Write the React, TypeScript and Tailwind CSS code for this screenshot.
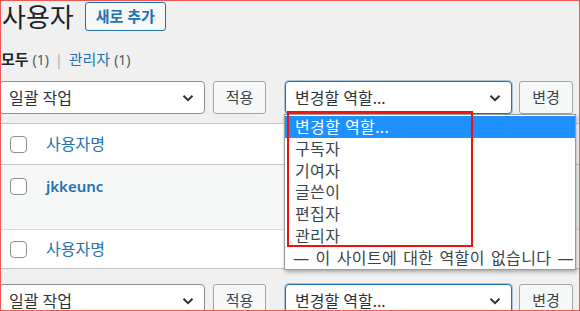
import type { ReactNode } from "react";

const FONT = "font-['Noto_Sans','Noto_Sans_CJK_KR',sans-serif]";

function Chevron() {
  return (
    <svg width="12" height="8" viewBox="0 0 12 8" className="shrink-0">
      <path d="M1.5 1.8 6 6.2l4.5-4.4" fill="none" stroke="#2c3338" strokeWidth="2" />
    </svg>
  );
}

function FakeSelect({
  label,
  className,
  focused,
}: {
  label: string;
  className: string;
  focused?: boolean;
}) {
  return (
    <div
      className={`${className} h-[33px] flex items-center justify-between pl-[9px] pr-[10px] bg-white rounded-[4px] border text-[16px] text-[#2c3338] ${
        focused ? "border-[#2271b1] shadow-[0_0_0_1px_rgba(34,113,177,0.35)]" : "border-[#8c8f94]"
      }`}
    >
      <span>{label}</span>
      <Chevron />
    </div>
  );
}

function Button({ children, className }: { children: ReactNode; className: string }) {
  return (
    <div
      className={`${className} h-[33px] flex items-center justify-center rounded-[3px] border border-[#a0a5aa] bg-[#f6f7f7] text-[15px] text-[#3c434a]`}
    >
      {children}
    </div>
  );
}

function Checkbox() {
  return <div className="w-[17px] h-[17px] shrink-0 rounded-[4px] border border-[#8c8f94] bg-white" />;
}

function Tablenav() {
  return (
    <div className="flex items-center h-[33px]">
      <FakeSelect label="일괄 작업" className="w-[206px] ml-[-2px]" />
      <Button className="w-[53px] ml-[8px]">적용</Button>
      <FakeSelect label="변경할 역할..." className="w-[227px] ml-[19px]" focused />
      <Button className="w-[54px] ml-[7px]">변경</Button>
    </div>
  );
}

const roles = ["변경할 역할...", "구독자", "기여자", "글쓴이", "편집자", "관리자"];

export default function App() {
  return (
    <div
      className={`${FONT} relative w-[580px] h-[311px] overflow-hidden bg-[#f0f0f1] border border-[#f25757]`}
    >
      {/* heading */}
      <div className="flex items-center h-[31px]">
        <h1 className="text-[26px] leading-[34px] text-[#1d2327] ml-[1px] whitespace-nowrap">사용자</h1>
        <div className="ml-[11px] h-[29px] px-[10px] flex items-center rounded-[3px] border border-[#2271b1] bg-[#f6f7f7] text-[15px] font-semibold text-[#2271b1]">
          새로 추가
        </div>
      </div>

      {/* views */}
      <div className="mt-[17px] h-[20px] flex items-center text-[14px] text-[#50575e]">
        <span className="text-[15px] font-bold text-[#1d2327]">모두</span>
        <span className="ml-[4px]">(1)</span>
        <span className="mx-[6px] text-[#a7aaad]">|</span>
        <span className="text-[15px] text-[#2271b1]">관리자</span>
        <span className="ml-[4px]">(1)</span>
      </div>

      <div className="mt-[12px]">
        <Tablenav />
      </div>

      {/* table */}
      <div className="mt-[9px] bg-white border-y border-[#c3c4c7]">
        <div className="h-[41px] flex items-center pl-[9px] border-b border-[#c3c4c7]">
          <Checkbox />
          <span className="ml-[19px] text-[16px] text-[#2271b1]">사용자명</span>
        </div>
        <div className="h-[65px] flex items-start pl-[9px] pt-[13px] bg-[#f6f7f7] border-b border-[#dcdcde]">
          <Checkbox />
          <span className="ml-[19px] text-[15px] leading-[17px] font-semibold text-[#2271b1]">jkkeunc</span>
        </div>
        <div className="h-[38px] flex items-center pl-[9px]">
          <Checkbox />
          <span className="ml-[19px] text-[16px] text-[#2271b1]">사용자명</span>
        </div>
      </div>

      <div className="mt-[15px]">
        <Tablenav />
      </div>

      {/* open dropdown */}
      <div className="absolute left-[283px] top-[113px] w-[292px] h-[156px] bg-white border border-[#9a9a9a] shadow-[1px_2px_4px_rgba(0,0,0,0.3)] pt-[1px] text-[16px] tracking-[0.4px] text-[#3c434a]">
        {roles.map((r, i) => (
          <div
            key={r}
            className={`h-[21.8px] flex items-center pl-[10px] ${i === 0 ? "bg-[#1e90ff] text-white" : ""}`}
          >
            {r}
          </div>
        ))}
        <div className="h-[21.8px] flex items-center pl-[8px] whitespace-nowrap [word-spacing:1.5px]">
          — 이 사이트에 대한 역할이 없습니다 —
        </div>
      </div>

      {/* annotation box */}
      <div className="absolute left-[286px] top-[110px] w-[186px] h-[136px] border-2 border-[#f01010]" />
    </div>
  );
}
